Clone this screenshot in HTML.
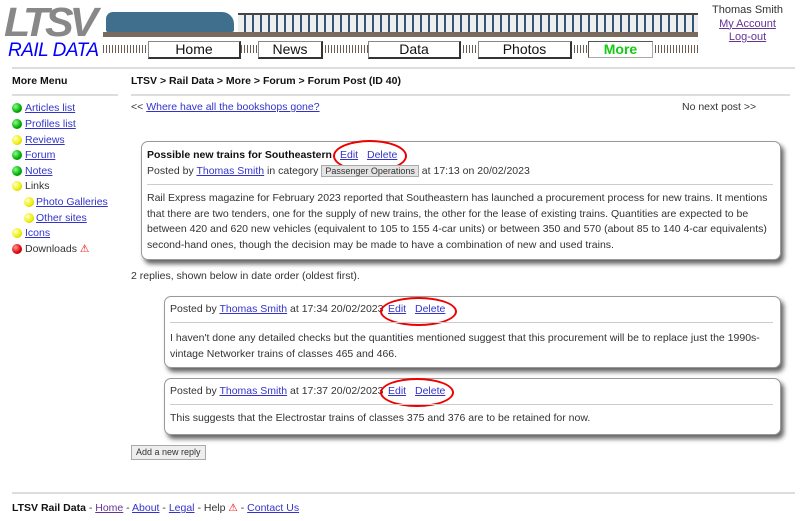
<!DOCTYPE html>
<html><head><style>
body{margin:0;width:800px;height:521px;background:#fff;font-family:"Liberation Sans",Arial,sans-serif;font-size:10.5px;color:#333;position:relative;overflow:hidden}
.a{position:absolute;white-space:nowrap}
a{color:#33c;text-decoration:underline}
.hr{position:absolute;height:2px;background:#ddd}
.btn{position:absolute;top:41px;height:15px;background:#fff;border:1px solid #888;border-right:2px solid #333;border-bottom:2px solid #333;font-size:14px;text-align:center;line-height:15px;color:#111}
.dot{position:absolute;width:10px;height:10px;border-radius:50%}
.g{background:radial-gradient(circle at 35% 35%,#8f8,#0a0 60%,#060)}
.y{background:radial-gradient(circle at 35% 35%,#ffc,#ee0 60%,#990)}
.r{background:radial-gradient(circle at 35% 35%,#f99,#d00 60%,#800)}
.box{position:absolute;border:1px solid #999;border-radius:7px;box-shadow:3px 4px 5px #666;background:#fff}
.ov{position:absolute;border:2px solid #e00;border-radius:50%}
.line{position:absolute;height:1px;background:#ccc}
</style></head><body>
<div class="a" style="left:4px;top:2px;font:italic bold 41px 'Liberation Sans';color:#888;letter-spacing:-4px;transform:scaleX(1.05);transform-origin:left;line-height:40px">LTSV</div>
<div class="a" style="left:8px;top:40px;font:italic 19px 'Liberation Sans';color:#00f;letter-spacing:-0.5px">RAIL DATA</div>
<div class="a" style="left:106px;top:12px;width:128px;height:20px;background:#3f6f8c;border-radius:7px 12px 2px 2px"></div>
<div class="a" style="left:238px;top:13px;width:460px;height:17px;background:repeating-linear-gradient(90deg,#eee 0 6px,#357 6px 8px);border-top:2px solid #444;border-bottom:4px solid #2a5a80"></div>
<div class="a" style="left:103px;top:32px;width:595px;height:5px;background:#7a6a5e"></div>
<div class="a" style="left:103px;top:45px;width:595px;height:8px;background:repeating-linear-gradient(90deg,#6a5a50 0 1px,#fff 1px 3px)"></div>
<div class="btn" style="left:148px;width:90px">Home</div>
<div class="btn" style="left:258px;width:62px">News</div>
<div class="btn" style="left:368px;width:90px">Data</div>
<div class="btn" style="left:478px;width:91px">Photos</div>
<div class="btn" style="left:588px;width:63px;color:#1c1;border-color:#555;border-right:1px solid #aaa;border-bottom:1px solid #aaa;font-weight:bold">More</div>
<div class="a" style="left:700px;width:95px;top:4px;text-align:center;line-height:13.5px;font-size:11px">Thomas Smith<br><a style="color:#639">My Account</a><br><a style="color:#639">Log-out</a></div>
<div class="hr" style="left:12px;top:67px;width:783px"></div>
<div class="a" style="left:12px;top:75px;font-weight:bold;color:#111">More Menu</div>
<div class="a" style="left:131px;top:75px;font-weight:bold;color:#111">LTSV &gt; Rail Data &gt; More &gt; Forum &gt; Forum Post (ID 40)</div>
<div class="hr" style="left:12px;top:94px;width:106px"></div>
<div class="hr" style="left:131px;top:94px;width:659px"></div>
<div class="dot g" style="left:12px;top:103px"></div><a class="a" style="left:25px;top:102px">Articles list</a>
<div class="dot g" style="left:12px;top:119px"></div><a class="a" style="left:25px;top:118px">Profiles list</a>
<div class="dot y" style="left:12px;top:135px"></div><a class="a" style="left:25px;top:134px">Reviews</a>
<div class="dot g" style="left:12px;top:150px"></div><a class="a" style="left:25px;top:149px">Forum</a>
<div class="dot g" style="left:12px;top:166px"></div><a class="a" style="left:25px;top:165px">Notes</a>
<div class="dot y" style="left:12px;top:181px"></div><div class="a" style="left:25px;top:180px">Links</div>
<div class="dot y" style="left:24px;top:197px"></div><a class="a" style="left:36px;top:196px">Photo Galleries</a>
<div class="dot y" style="left:24px;top:213px"></div><a class="a" style="left:36px;top:212px">Other sites</a>
<div class="dot y" style="left:12px;top:228px"></div><a class="a" style="left:25px;top:227px">Icons</a>
<div class="dot r" style="left:12px;top:244px"></div><div class="a" style="left:25px;top:243px">Downloads <span style="color:#e00">⚠</span></div>
<div class="a" style="left:131px;top:101px">&lt;&lt; <a>Where have all the bookshops gone?</a></div>
<div class="a" style="left:682px;top:101px">No next post &gt;&gt;</div>
<div class="box" style="left:141px;top:141px;width:638px;height:117px"></div>
<div class="a" style="left:147px;top:149px;font-weight:bold;color:#111">Possible new trains for Southeastern</div>
<a class="a" style="left:340px;top:149px">Edit</a><a class="a" style="left:367px;top:149px">Delete</a>
<div class="ov" style="left:333px;top:140px;width:70px;height:28px"></div>
<div class="a" style="left:147px;top:165px">Posted by <a>Thomas Smith</a> in category <span style="background:#e4e4e4;border:1px solid #aaa;padding:0 3px;font-size:9px">Passenger Operations</span> at 17:13 on 20/02/2023</div>
<div class="line" style="left:147px;top:184px;width:626px"></div>
<div class="a" style="left:147px;top:191px;line-height:15.7px">Rail Express magazine for February 2023 reported that Southeastern has launched a procurement process for new trains. It mentions<br>that there are two tenders, one for the supply of new trains, the other for the lease of existing trains. Quantities are expected to be<br>between 420 and 620 new vehicles (equivalent to 105 to 155 4-car units) or between 350 and 570 (about 85 to 140 4-car equivalents)<br>second-hand ones, though the decision may be made to have a combination of new and used trains.</div>
<div class="a" style="left:131px;top:270px">2 replies, shown below in date order (oldest first).</div>
<div class="box" style="left:164px;top:296px;width:615px;height:70px"></div>
<div class="a" style="left:170px;top:303px">Posted by <a>Thomas Smith</a> at 17:34 20/02/2023</div>
<a class="a" style="left:388px;top:303px">Edit</a><a class="a" style="left:415px;top:303px">Delete</a>
<div class="ov" style="left:380px;top:297px;width:73px;height:25px"></div>
<div class="line" style="left:170px;top:322px;width:603px"></div>
<div class="a" style="left:170px;top:330px;line-height:16px">I haven't done any detailed checks but the quantities mentioned suggest that this procurement will be to replace just the 1990s-<br>vintage Networker trains of classes 465 and 466.</div>
<div class="box" style="left:164px;top:378px;width:615px;height:55px"></div>
<div class="a" style="left:170px;top:385px">Posted by <a>Thomas Smith</a> at 17:37 20/02/2023</div>
<a class="a" style="left:388px;top:385px">Edit</a><a class="a" style="left:415px;top:385px">Delete</a>
<div class="ov" style="left:380px;top:378px;width:70px;height:25px"></div>
<div class="line" style="left:170px;top:404px;width:603px"></div>
<div class="a" style="left:170px;top:412px">This suggests that the Electrostar trains of classes 375 and 376 are to be retained for now.</div>
<div class="a" style="left:131px;top:445px;height:13px;border:1px solid #aaa;background:#eee;font-size:9px;line-height:13px;padding:0 4px">Add a new reply</div>
<div class="hr" style="left:12px;top:492px;width:783px"></div>
<div class="a" style="left:12px;top:502px"><b style="color:#111">LTSV Rail Data</b> - <a style="color:#639">Home</a> - <a>About</a> - <a>Legal</a> - Help <span style="color:#e00">⚠</span> - <a>Contact Us</a></div>
</body></html>
